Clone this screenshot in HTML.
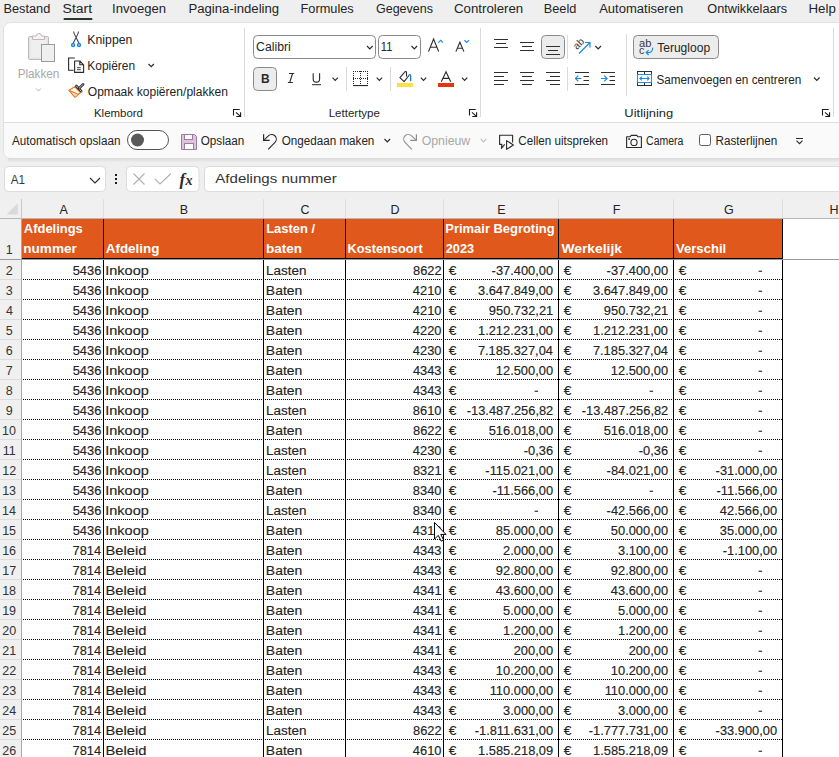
<!DOCTYPE html>
<html><head><meta charset="utf-8"><style>
html,body{margin:0;padding:0;background:#efefef;overflow:hidden;}
svg{display:block;font-family:"Liberation Sans",sans-serif;}
</style></head><body>
<svg width="839" height="757" viewBox="0 0 839 757" fill="#242424">
<rect x="0" y="0" width="839" height="757" fill="#efefef"/>
<text x="3.48" y="12.50" font-size="12.5" textLength="46.85" lengthAdjust="spacingAndGlyphs">Bestand</text>
<text x="62.57" y="12.50" font-size="12.5" textLength="29.53" lengthAdjust="spacingAndGlyphs">Start</text>
<text x="112.12" y="12.50" font-size="12.5" textLength="53.93" lengthAdjust="spacingAndGlyphs">Invoegen</text>
<text x="188.45" y="12.50" font-size="12.5" textLength="90.70" lengthAdjust="spacingAndGlyphs">Pagina-indeling</text>
<text x="300.48" y="12.50" font-size="12.5" textLength="53.24" lengthAdjust="spacingAndGlyphs">Formules</text>
<text x="375.97" y="12.50" font-size="12.5">Gegevens</text>
<text x="453.94" y="12.50" font-size="12.5" textLength="69.33" lengthAdjust="spacingAndGlyphs">Controleren</text>
<text x="543.78" y="12.50" font-size="12.5" textLength="32.58" lengthAdjust="spacingAndGlyphs">Beeld</text>
<text x="599.20" y="12.50" font-size="12.5" textLength="83.99" lengthAdjust="spacingAndGlyphs">Automatiseren</text>
<text x="707.33" y="12.50" font-size="12.5" textLength="79.82" lengthAdjust="spacingAndGlyphs">Ontwikkelaars</text>
<text x="808.54" y="12.50" font-size="12.5" textLength="27.32" lengthAdjust="spacingAndGlyphs">Help</text>
<rect x="63.5" y="18" width="29" height="2" rx="1" fill="#27382f"/>
<rect x="3.5" y="22.5" width="860" height="135.5" rx="7" fill="#ffffff" stroke="#e0e0e0"/>
<defs><clipPath id="pc"><rect x="4" y="23" width="860" height="135" rx="6.5"/></clipPath></defs>
<g clip-path="url(#pc)"><rect x="0" y="123" width="860" height="40" fill="#fafafa"/></g>
<rect x="4" y="122" width="850" height="1" fill="#e0e0e0"/>
<defs><linearGradient id="sh" x1="0" y1="0" x2="0" y2="1"><stop offset="0" stop-color="#d9d9d9"/><stop offset="1" stop-color="#efefef"/></linearGradient></defs>
<rect x="8" y="158" width="845" height="4.5" fill="url(#sh)"/>
<rect x="28.5" y="36.5" width="20" height="23" rx="1" fill="#e6e6e6" stroke="#b9b9b9"/>
<rect x="31" y="39" width="15" height="18" fill="#efefef"/>
<path d="M32.5 39.5 v-3.5 h4 a2.5 2.5 0 0 1 5 0 h3 v3.5 z" fill="#f4f4f4" stroke="#c4b4b8"/>
<rect x="41.5" y="44.5" width="13" height="17" fill="#efefef" stroke="#9a9a9a"/>
<text x="17.66" y="77.60" font-size="12.5" textLength="41.73" lengthAdjust="spacingAndGlyphs" fill="#a8a8a8">Plakken</text>
<path d="M36 88.5 l2.5 2.5 l2.5 -2.5" fill="none" stroke="#b0b0b0" stroke-width="1"/>
<path d="M73.6 31.5 Q74 34 76.1 37.5 L79 43.2 M78.6 31.5 Q78.2 34 76.1 37.5 L73.2 43.2" stroke="#4a4250" stroke-width="1.1" fill="none"/>
<circle cx="73.1" cy="45" r="1.5" fill="#bfe0f8" stroke="#1e8be0" stroke-width="1.4"/>
<circle cx="79" cy="45" r="1.5" fill="#bfe0f8" stroke="#1e8be0" stroke-width="1.4"/>
<text x="87.32" y="44.00" font-size="12.5" textLength="45.08" lengthAdjust="spacingAndGlyphs">Knippen</text>
<path d="M74.8 58 h-6.2 v12.3 h5" fill="none" stroke="#2a2a2a" stroke-width="1.1"/>
<path d="M74.6 61 h5.2 l3.8 3.8 v7.6 h-9 z M79.8 61 v3.8 h3.8" fill="#fff" stroke="#2a2a2a" stroke-width="1.1" stroke-linejoin="round"/>
<path d="M77 67.7 h3.8 M77 69.7 h3.8" stroke="#2a2a2a" stroke-width="0.9"/>
<text x="87.35" y="69.90" font-size="12.5" textLength="47.77" lengthAdjust="spacingAndGlyphs">Kopiëren</text>
<path d="M148.5 64 l2.7 2.7 l2.7 -2.7" fill="none" stroke="#2a2a2a" stroke-width="1.2"/>
<path d="M74.8 86.8 L69 90.3 L75 97.3 L80.6 92.6 Z" fill="#fff" stroke="#ea7a22" stroke-width="1.3" stroke-linejoin="round"/>
<path d="M69.5 90.6 L78.5 94.5" stroke="#ea7a22" stroke-width="1.2"/>
<path d="M73.5 93.5 L77.5 95 L75 97 Z" fill="#f9c98a"/>
<path d="M76.3 86 L81.2 91.2" stroke="#333" stroke-width="2.6" stroke-linecap="round"/>
<path d="M76.3 86 L81.2 91.2" stroke="#fff" stroke-width="0.7" stroke-linecap="round"/>
<path d="M78.8 88.6 L83.2 84.3" stroke="#333" stroke-width="2.6" stroke-linecap="round"/>
<path d="M79.3 88.1 L83.2 84.3" stroke="#fff" stroke-width="0.7" stroke-linecap="round"/>
<text x="87.76" y="95.60" font-size="12.5" textLength="140.26" lengthAdjust="spacingAndGlyphs">Opmaak kopiëren/plakken</text>
<text x="93.98" y="117.00" font-size="11.2" textLength="48.96" lengthAdjust="spacingAndGlyphs">Klembord</text>
<path d="M233.5 115.6 V109.5 H239.7 M236 112.3 L240.2 116.2 M240.6 112.3 V116.5 H236.3" fill="none" stroke="#1a1a1a" stroke-width="1.1"/>
<rect x="244" y="28" width="1" height="89" fill="#dadada"/>
<rect x="253.5" y="35.5" width="122" height="23" rx="4" fill="#fff" stroke="#8a8a8a"/>
<text x="256.09" y="50.70" font-size="12.5" textLength="34.66" lengthAdjust="spacingAndGlyphs">Calibri</text>
<path d="M367 46 l2.8 2.8 l2.8 -2.8" fill="none" stroke="#2a2a2a" stroke-width="1.2"/>
<rect x="378.5" y="35.5" width="42" height="23" rx="4" fill="#fff" stroke="#8a8a8a"/>
<text x="380.87" y="50.70" font-size="12.5" textLength="11.46" lengthAdjust="spacingAndGlyphs">11</text>
<path d="M411.5 46 l2.8 2.8 l2.8 -2.8" fill="none" stroke="#2a2a2a" stroke-width="1.2"/>
<path d="M428.5 51.6 L433.6 39 L438.7 51.6 M430.3 47.2 h6.6" fill="none" stroke="#2a2a2a" stroke-width="1.1"/>
<path d="M438.4 42.6 l2.3 -2.2 l2.3 2.2" fill="none" stroke="#1e8be0" stroke-width="1.2"/>
<path d="M455.9 51.6 L459.9 42.2 L463.9 51.6 M457.3 48.3 h5.2" fill="none" stroke="#2a2a2a" stroke-width="1.1"/>
<path d="M464.4 40.3 l2.3 2.2 l2.3 -2.2" fill="none" stroke="#1e8be0" stroke-width="1.2"/>
<rect x="253.5" y="67.5" width="23" height="23" rx="4" fill="#ececec" stroke="#8a8a8a"/>
<text x="261.12" y="82.60" font-size="12.5" textLength="8.64" lengthAdjust="spacingAndGlyphs" font-weight="bold" fill="#2a2a2a">B</text>
<path d="M289 73.5 h5.2 M287.9 82.5 h5 M292.6 73.5 L289.7 82.5" stroke="#2a2a2a" stroke-width="1.1" fill="none"/>
<path d="M313.2 73.3 v5.6 a3.2 3.2 0 0 0 6.4 0 v-5.6" stroke="#2a2a2a" stroke-width="1.1" fill="none"/>
<rect x="312" y="84.2" width="9" height="1" fill="#2a2a2a"/>
<path d="M332.5 77.7 l2.7 2.7 l2.7 -2.7" fill="none" stroke="#2a2a2a" stroke-width="1.2"/>
<rect x="346" y="67" width="1" height="24" fill="#dadada"/>
<defs><pattern id="dh" x="0" y="0" width="2" height="2" patternUnits="userSpaceOnUse"><rect x="1" y="1" width="1" height="1" fill="#2a2a2a"/></pattern></defs>
<path d="M353 71h1v1h-1zM355 71h1v1h-1zM357 71h1v1h-1zM359 71h1v1h-1zM361 71h1v1h-1zM363 71h1v1h-1zM365 71h1v1h-1zM367 71h1v1h-1zM353 78h1v1h-1zM355 78h1v1h-1zM357 78h1v1h-1zM359 78h1v1h-1zM361 78h1v1h-1zM363 78h1v1h-1zM365 78h1v1h-1zM367 78h1v1h-1zM353 71h1v1h-1zM353 73h1v1h-1zM353 75h1v1h-1zM353 77h1v1h-1zM353 79h1v1h-1zM353 81h1v1h-1zM353 83h1v1h-1zM360 71h1v1h-1zM360 73h1v1h-1zM360 75h1v1h-1zM360 77h1v1h-1zM360 79h1v1h-1zM360 81h1v1h-1zM360 83h1v1h-1zM367 71h1v1h-1zM367 73h1v1h-1zM367 75h1v1h-1zM367 77h1v1h-1zM367 79h1v1h-1zM367 81h1v1h-1zM367 83h1v1h-1z" fill="#2a2a2a"/>
<rect x="353" y="85" width="15" height="1.1" fill="#2a2a2a"/>
<path d="M376.7 77.7 l2.7 2.7 l2.7 -2.7" fill="none" stroke="#2a2a2a" stroke-width="1.2"/>
<rect x="390" y="67" width="1" height="24" fill="#dadada"/>
<path d="M406.5 76.5 V72.2 Q405.5 70.6 404.5 72.3 L399.9 77.6 L404.1 81.7 L408.9 75.5" fill="#fff" stroke="#2a2a2a" stroke-width="1.1" stroke-linejoin="round"/>
<path d="M409 75 Q410.5 74.2 410.6 76 V80.5" fill="none" stroke="#1e78d0" stroke-width="1.4" stroke-linecap="round"/>
<rect x="397" y="83" width="16" height="4" fill="#fbe04a"/>
<path d="M420.8 77.7 l2.7 2.7 l2.7 -2.7" fill="none" stroke="#2a2a2a" stroke-width="1.2"/>
<path d="M441.3 81.8 L446 71.8 L450.7 81.8 M442.8 78.4 h6.4" fill="none" stroke="#2a2a2a" stroke-width="1.1"/>
<rect x="438" y="83" width="16" height="4" fill="#e8340e"/>
<path d="M461.9 77.7 l2.7 2.7 l2.7 -2.7" fill="none" stroke="#2a2a2a" stroke-width="1.2"/>
<path d="M469.5 115.6 V109.5 H475.7 M472 112.3 L476.2 116.2 M476.6 112.3 V116.5 H472.3" fill="none" stroke="#1a1a1a" stroke-width="1.1"/>
<text x="328.68" y="117.00" font-size="11.2" textLength="51.27" lengthAdjust="spacingAndGlyphs">Lettertype</text>
<rect x="480" y="28" width="1" height="89" fill="#dadada"/>
<path d="M494 39.5 h14 M496 43.5 h10 M494 47.5 h14 " stroke="#2f2f2f" stroke-width="1.2" fill="none"/>
<path d="M520 42.5 h14 M522 46.5 h10 M520 50.5 h14 " stroke="#2f2f2f" stroke-width="1.2" fill="none"/>
<rect x="541.5" y="35.5" width="23" height="23" rx="4" fill="#ececec" stroke="#8a8a8a"/>
<path d="M546 46.5 h14 M548 50.5 h10 M546 54.5 h14 " stroke="#2f2f2f" stroke-width="1.2" fill="none"/>
<rect x="567" y="35" width="1" height="24" fill="#dadada"/>
<text x="0" y="0" font-size="10" fill="#3a3a3a" transform="translate(577 50) rotate(-45)">ab</text>
<path d="M579 53.5 L590 42.5 M585 42.5 h5 v5" fill="none" stroke="#1e8be0" stroke-width="1.2"/>
<path d="M595.4 46 l2.8 2.8 l2.8 -2.8" fill="none" stroke="#2a2a2a" stroke-width="1.2"/>
<path d="M494 72.5 h14 M494 76.5 h10 M494 80.5 h14 M494 84.5 h10 " stroke="#2f2f2f" stroke-width="1.2" fill="none"/>
<path d="M520 72.5 h14 M522 76.5 h10 M520 80.5 h14 M522 84.5 h10 " stroke="#2f2f2f" stroke-width="1.2" fill="none"/>
<path d="M546 72.5 h14 M550 76.5 h10 M546 80.5 h14 M550 84.5 h10 " stroke="#2f2f2f" stroke-width="1.2" fill="none"/>
<rect x="567" y="67" width="1" height="24" fill="#dadada"/>
<path d="M575 72.5 h14 M583.5 76.5 h5.5 M583.5 80.5 h5.5 M575 84.5 h14 " stroke="#2f2f2f" stroke-width="1.2" fill="none"/>
<path d="M581.5 78.5 h-6 M578.3 75.7 l-2.8 2.8 l2.8 2.8" fill="none" stroke="#1e8be0" stroke-width="1.2"/>
<path d="M601 72.5 h14 M609.5 76.5 h5.5 M609.5 80.5 h5.5 M601 84.5 h14 " stroke="#2f2f2f" stroke-width="1.2" fill="none"/>
<path d="M601 78.5 h6 M604.3 75.7 l2.8 2.8 l-2.8 2.8" fill="none" stroke="#1e8be0" stroke-width="1.2"/>
<rect x="626" y="34" width="1" height="62" fill="#dadada"/>
<rect x="633.5" y="35.5" width="85" height="23" rx="4" fill="#ececec" stroke="#8a8a8a"/>
<text x="639.05" y="46.50" font-size="10" textLength="12.42" lengthAdjust="spacingAndGlyphs" fill="#3a3a3a">ab</text>
<text x="639.07" y="53.50" font-size="10" textLength="5.40" lengthAdjust="spacingAndGlyphs" fill="#3a3a3a">c</text>
<path d="M652.6 47.6 Q653 53.3 646.5 52.6 M648.6 50.2 l-2.4 2.4 l2.4 2.4" fill="none" stroke="#1e8be0" stroke-width="1.2"/>
<text x="657.16" y="51.80" font-size="12.5" textLength="52.95" lengthAdjust="spacingAndGlyphs">Terugloop</text>
<rect x="637.5" y="71.5" width="14" height="14" fill="#fff" stroke="#2f2f2f"/>
<path d="M644.5 71.5 v3 M644.5 82.5 v3" fill="none" stroke="#2f2f2f"/>
<rect x="637.5" y="74.5" width="14" height="8" fill="#fff" stroke="#1e8be0"/>
<path d="M640 78.5 h9 M641.8 76.6 l-1.9 1.9 l1.9 1.9 M647.2 76.6 l1.9 1.9 l-1.9 1.9" fill="none" stroke="#1e8be0" stroke-width="1.1"/>
<text x="656.47" y="83.50" font-size="12.5" textLength="144.72" lengthAdjust="spacingAndGlyphs">Samenvoegen en centreren</text>
<path d="M814 77.5 l2.8 2.8 l2.8 -2.8" fill="none" stroke="#2a2a2a" stroke-width="1.2"/>
<text x="624.33" y="117.00" font-size="11.2" textLength="48.90" lengthAdjust="spacingAndGlyphs">Uitlijning</text>
<path d="M822.5 115.6 V109.5 H828.7 M825 112.3 L829.2 116.2 M829.6 112.3 V116.5 H825.3" fill="none" stroke="#1a1a1a" stroke-width="1.1"/>
<rect x="833" y="28" width="1" height="89" fill="#dadada"/>
<text x="12.10" y="144.80" font-size="12.5" textLength="108.30" lengthAdjust="spacingAndGlyphs">Automatisch opslaan</text>
<rect x="127.5" y="130.5" width="41" height="19" rx="9.5" fill="#fff" stroke="#555"/>
<circle cx="137.5" cy="140" r="6.5" fill="#5a5a5a"/>
<path d="M181.5 134.5 h13 l2 2 v13 h-15 z" fill="#dcc4dc" stroke="#a07aa0"/>
<rect x="184.5" y="134.5" width="8" height="5" fill="#fff" stroke="#a07aa0"/>
<rect x="184.5" y="143.5" width="9" height="6" fill="#fff" stroke="#a07aa0"/>
<text x="200.77" y="144.80" font-size="12.5" textLength="43.58" lengthAdjust="spacingAndGlyphs">Opslaan</text>
<path d="M263.6 134.3 V140.3 H269.7" fill="none" stroke="#2a2a2a" stroke-width="1.2"/>
<path d="M264.2 139.8 L268.3 135.9 A4.6 4.6 0 0 1 275 142.3 L268.2 149.3" fill="none" stroke="#2a2a2a" stroke-width="1.1"/>
<text x="281.78" y="144.80" font-size="12.5" textLength="92.59" lengthAdjust="spacingAndGlyphs">Ongedaan maken</text>
<path d="M384.5 139 l2.8 2.8 l2.8 -2.8" fill="none" stroke="#2a2a2a" stroke-width="1.2"/>
<path d="M416.4 134.3 V140.3 H410.3" fill="none" stroke="#8e8e8e" stroke-width="1.2"/>
<path d="M415.8 139.8 L411.7 135.9 A4.6 4.6 0 0 0 405 142.3 L411.8 149.3" fill="none" stroke="#8e8e8e" stroke-width="1.1"/>
<text x="421.65" y="144.80" font-size="12.5" textLength="48.62" lengthAdjust="spacingAndGlyphs" fill="#a8a8a8">Opnieuw</text>
<path d="M480.7 139 l2.8 2.8 l2.8 -2.8" fill="none" stroke="#c0c0c0" stroke-width="1.2"/>
<path d="M512.6 142.5 V135.3 H499.6 V144.4 H501.9 L501.4 148.4 L504.7 144.3" fill="none" stroke="#2a2a2a" stroke-width="1.1" stroke-linejoin="round"/>
<path d="M506.6 140.6 V149.4 L513.4 145 Z" fill="#fff" stroke="#2a2a2a" stroke-width="1.1" stroke-linejoin="round"/>
<text x="518.32" y="144.70" font-size="12.5" textLength="89.76" lengthAdjust="spacingAndGlyphs">Cellen uitspreken</text>
<path d="M626.6 136.7 H630.3 L631 135.4 H637 L637.7 136.7 H641.4 V147.5 H626.6 Z" fill="none" stroke="#2a2a2a" stroke-width="1.1" stroke-linejoin="round"/>
<circle cx="634" cy="142.4" r="3.1" fill="none" stroke="#2a2a2a" stroke-width="1.1"/>
<rect x="628.3" y="138.3" width="1.6" height="1.6" fill="#2a2a2a"/>
<text x="646.08" y="144.90" font-size="12.5" textLength="37.34" lengthAdjust="spacingAndGlyphs">Camera</text>
<rect x="699.5" y="134.5" width="11" height="11" rx="2" fill="#fff" stroke="#5a5a5a"/>
<text x="715.47" y="144.90" font-size="12.5" textLength="61.70" lengthAdjust="spacingAndGlyphs">Rasterlijnen</text>
<path d="M796 138.5 h7 M796.5 140.6 l3 3 l3 -3" fill="none" stroke="#2a2a2a" stroke-width="1.1"/>
<rect x="4.5" y="166.5" width="101" height="25" rx="4" fill="#fff" stroke="#dcdcdc"/>
<text x="10.80" y="183.90" font-size="12.5" textLength="14.26" lengthAdjust="spacingAndGlyphs" fill="#3a3a3a">A1</text>
<path d="M90 178 l5 5 l5 -5" fill="none" stroke="#2a2a2a" stroke-width="1.1"/>
<path d="M115 174h2v2h-2z M115 178h2v2h-2z M115 182h2v2h-2z" fill="#1a1a1a"/>
<rect x="126.5" y="166.5" width="72.5" height="25" rx="4" fill="#fff" stroke="#dcdcdc"/>
<path d="M133.5 173.5 l11 11 M144.5 173.5 l-11 11" stroke="#b0b0b0" stroke-width="1.1"/>
<path d="M155 179 l5 5 l11 -10.5" fill="none" stroke="#b0b0b0" stroke-width="1.1"/>
<text x="179.5" y="185" font-size="17" font-family="Liberation Serif" font-style="italic" font-weight="bold" fill="#2a2a2a">f</text>
<text x="185.5" y="185" font-size="14" font-family="Liberation Serif" font-style="italic" font-weight="bold" fill="#2a2a2a">x</text>
<rect x="204.5" y="166.5" width="650" height="25" rx="4" fill="#fff" stroke="#dcdcdc"/>
<text x="215.30" y="182.90" font-size="12.5" textLength="121.39" lengthAdjust="spacingAndGlyphs" fill="#333333">Afdelings nummer</text>
<rect x="0" y="199" width="839" height="558" fill="#ffffff"/>
<rect x="0" y="199" width="839" height="19" fill="#f0f0f0"/>
<rect x="0" y="218" width="839" height="1" fill="#b4b8ba"/>
<rect x="0" y="219" width="21" height="538" fill="#f0f0f0"/>
<rect x="21" y="199" width="1" height="20" fill="#c8c8c8"/>
<rect x="21" y="219" width="1" height="538" fill="#a8a8a8"/>
<path d="M6.5 214.6 L17.8 203.3 V214.6 Z" fill="#dadada"/>
<rect x="103" y="199" width="1" height="19" fill="#dedede"/>
<rect x="263" y="199" width="1" height="19" fill="#dedede"/>
<rect x="345" y="199" width="1" height="19" fill="#dedede"/>
<rect x="443" y="199" width="1" height="19" fill="#dedede"/>
<rect x="558" y="199" width="1" height="19" fill="#dedede"/>
<rect x="673" y="199" width="1" height="19" fill="#dedede"/>
<rect x="782" y="199" width="1" height="19" fill="#dedede"/>
<text x="59.54" y="213.70" font-size="12.5">A</text>
<text x="179.86" y="213.70" font-size="12.5">B</text>
<text x="300.61" y="213.70" font-size="12.5">C</text>
<text x="390.48" y="213.70" font-size="12.5">D</text>
<text x="497.29" y="213.70" font-size="12.5">E</text>
<text x="612.64" y="213.70" font-size="12.5">F</text>
<text x="723.98" y="213.70" font-size="12.5">G</text>
<text x="829.50" y="213.70" font-size="12.5">H</text>
<rect x="0" y="259" width="21" height="1" fill="#dcdcdc"/>
<text x="5.64" y="253.90" font-size="12.5" fill="#333333">1</text>
<rect x="0" y="279" width="21" height="1" fill="#dcdcdc"/>
<text x="5.83" y="274.90" font-size="12.5" fill="#333333">2</text>
<rect x="0" y="299" width="21" height="1" fill="#dcdcdc"/>
<text x="5.83" y="294.90" font-size="12.5" fill="#333333">3</text>
<rect x="0" y="319" width="21" height="1" fill="#dcdcdc"/>
<text x="5.89" y="314.90" font-size="12.5" fill="#333333">4</text>
<rect x="0" y="339" width="21" height="1" fill="#dcdcdc"/>
<text x="5.83" y="334.90" font-size="12.5" fill="#333333">5</text>
<rect x="0" y="359" width="21" height="1" fill="#dcdcdc"/>
<text x="5.77" y="354.90" font-size="12.5" fill="#333333">6</text>
<rect x="0" y="379" width="21" height="1" fill="#dcdcdc"/>
<text x="5.83" y="374.90" font-size="12.5" fill="#333333">7</text>
<rect x="0" y="399" width="21" height="1" fill="#dcdcdc"/>
<text x="5.80" y="394.90" font-size="12.5" fill="#333333">8</text>
<rect x="0" y="419" width="21" height="1" fill="#dcdcdc"/>
<text x="5.83" y="414.90" font-size="12.5" fill="#333333">9</text>
<rect x="0" y="439" width="21" height="1" fill="#dcdcdc"/>
<text x="2.11" y="434.90" font-size="12.5" fill="#333333">10</text>
<rect x="0" y="459" width="21" height="1" fill="#dcdcdc"/>
<text x="2.64" y="454.90" font-size="12.5" fill="#333333">11</text>
<rect x="0" y="479" width="21" height="1" fill="#dcdcdc"/>
<text x="2.21" y="474.90" font-size="12.5" fill="#333333">12</text>
<rect x="0" y="499" width="21" height="1" fill="#dcdcdc"/>
<text x="2.14" y="494.90" font-size="12.5" fill="#333333">13</text>
<rect x="0" y="519" width="21" height="1" fill="#dcdcdc"/>
<text x="2.08" y="514.90" font-size="12.5" fill="#333333">14</text>
<rect x="0" y="539" width="21" height="1" fill="#dcdcdc"/>
<text x="2.14" y="534.90" font-size="12.5" fill="#333333">15</text>
<rect x="0" y="559" width="21" height="1" fill="#dcdcdc"/>
<text x="2.14" y="554.90" font-size="12.5" fill="#333333">16</text>
<rect x="0" y="579" width="21" height="1" fill="#dcdcdc"/>
<text x="2.21" y="574.90" font-size="12.5" fill="#333333">17</text>
<rect x="0" y="599" width="21" height="1" fill="#dcdcdc"/>
<text x="2.14" y="594.90" font-size="12.5" fill="#333333">18</text>
<rect x="0" y="619" width="21" height="1" fill="#dcdcdc"/>
<text x="2.17" y="614.90" font-size="12.5" fill="#333333">19</text>
<rect x="0" y="639" width="21" height="1" fill="#dcdcdc"/>
<text x="2.27" y="634.90" font-size="12.5" fill="#333333">20</text>
<rect x="0" y="659" width="21" height="1" fill="#dcdcdc"/>
<text x="2.33" y="654.90" font-size="12.5" fill="#333333">21</text>
<rect x="0" y="679" width="21" height="1" fill="#dcdcdc"/>
<text x="2.36" y="674.90" font-size="12.5" fill="#333333">22</text>
<rect x="0" y="699" width="21" height="1" fill="#dcdcdc"/>
<text x="2.30" y="694.90" font-size="12.5" fill="#333333">23</text>
<rect x="0" y="719" width="21" height="1" fill="#dcdcdc"/>
<text x="2.24" y="714.90" font-size="12.5" fill="#333333">24</text>
<rect x="0" y="739" width="21" height="1" fill="#dcdcdc"/>
<text x="2.30" y="734.90" font-size="12.5" fill="#333333">25</text>
<text x="2.30" y="754.90" font-size="12.5" fill="#333333">26</text>
<rect x="22" y="219" width="760" height="39" fill="#e0581c"/>
<rect x="22" y="258" width="761" height="1" fill="#000"/>
<rect x="22" y="259" width="817" height="1" fill="#9a9a9a"/>
<rect x="0" y="259" width="21" height="1" fill="#9a9a9a"/>
<text x="23.88" y="232.90" font-size="12.5" textLength="58.85" lengthAdjust="spacingAndGlyphs" font-weight="bold" fill="#ffffff">Afdelings</text>
<text x="23.32" y="252.60" font-size="12.5" textLength="53.49" lengthAdjust="spacingAndGlyphs" font-weight="bold" fill="#ffffff">nummer</text>
<text x="105.76" y="252.60" font-size="12.5" textLength="53.60" lengthAdjust="spacingAndGlyphs" font-weight="bold" fill="#ffffff">Afdeling</text>
<text x="266.16" y="233.00" font-size="12.5" textLength="48.96" lengthAdjust="spacingAndGlyphs" font-weight="bold" fill="#ffffff">Lasten /</text>
<text x="266.12" y="252.60" font-size="12.5" textLength="36.02" lengthAdjust="spacingAndGlyphs" font-weight="bold" fill="#ffffff">baten</text>
<text x="347.57" y="252.60" font-size="12.5" textLength="75.21" lengthAdjust="spacingAndGlyphs" font-weight="bold" fill="#ffffff">Kostensoort</text>
<text x="445.36" y="233.00" font-size="12.5" textLength="109.19" lengthAdjust="spacingAndGlyphs" font-weight="bold" fill="#ffffff">Primair Begroting</text>
<text x="445.75" y="252.60" font-size="12.5" textLength="28.39" lengthAdjust="spacingAndGlyphs" font-weight="bold" fill="#ffffff">2023</text>
<text x="561.40" y="252.60" font-size="12.5" textLength="60.64" lengthAdjust="spacingAndGlyphs" font-weight="bold" fill="#ffffff">Werkelijk</text>
<text x="676.03" y="252.60" font-size="12.5" textLength="50.13" lengthAdjust="spacingAndGlyphs" font-weight="bold" fill="#ffffff">Verschil</text>
<text x="72.72" y="274.50" font-size="12.5" textLength="28.59" lengthAdjust="spacingAndGlyphs" stroke="#242424" stroke-width="0.15">5436</text>
<text x="105.30" y="274.50" font-size="12.5" textLength="43.42" lengthAdjust="spacingAndGlyphs" stroke="#242424" stroke-width="0.15">Inkoop</text>
<text x="265.92" y="274.50" font-size="12.5" textLength="40.49" lengthAdjust="spacingAndGlyphs" stroke="#242424" stroke-width="0.15">Lasten</text>
<text x="413.04" y="274.50" font-size="12.5" textLength="28.59" lengthAdjust="spacingAndGlyphs" stroke="#242424" stroke-width="0.15">8622</text>
<text x="448.86" y="274.50" font-size="12.5" textLength="7.66" lengthAdjust="spacingAndGlyphs" stroke="#242424" stroke-width="0.15">€</text>
<text x="491.61" y="274.50" font-size="12.5" textLength="61.46" lengthAdjust="spacingAndGlyphs" stroke="#242424" stroke-width="0.15">-37.400,00</text>
<text x="563.86" y="274.50" font-size="12.5" textLength="7.66" lengthAdjust="spacingAndGlyphs" stroke="#242424" stroke-width="0.15">€</text>
<text x="606.61" y="274.50" font-size="12.5" textLength="61.46" lengthAdjust="spacingAndGlyphs" stroke="#242424" stroke-width="0.15">-37.400,00</text>
<text x="678.86" y="274.50" font-size="12.5" textLength="7.66" lengthAdjust="spacingAndGlyphs" stroke="#242424" stroke-width="0.15">€</text>
<rect x="758.6" y="270.7" width="3.5" height="1.1" fill="#242424"/>
<text x="72.72" y="294.50" font-size="12.5" textLength="28.59" lengthAdjust="spacingAndGlyphs" stroke="#242424" stroke-width="0.15">5436</text>
<text x="105.30" y="294.50" font-size="12.5" textLength="43.42" lengthAdjust="spacingAndGlyphs" stroke="#242424" stroke-width="0.15">Inkoop</text>
<text x="265.89" y="294.50" font-size="12.5" textLength="36.36" lengthAdjust="spacingAndGlyphs" stroke="#242424" stroke-width="0.15">Baten</text>
<text x="412.85" y="294.50" font-size="12.5" textLength="28.59" lengthAdjust="spacingAndGlyphs" stroke="#242424" stroke-width="0.15">4210</text>
<text x="448.86" y="294.50" font-size="12.5" textLength="7.66" lengthAdjust="spacingAndGlyphs" stroke="#242424" stroke-width="0.15">€</text>
<text x="477.99" y="294.50" font-size="12.5" textLength="75.05" lengthAdjust="spacingAndGlyphs" stroke="#242424" stroke-width="0.15">3.647.849,00</text>
<text x="563.86" y="294.50" font-size="12.5" textLength="7.66" lengthAdjust="spacingAndGlyphs" stroke="#242424" stroke-width="0.15">€</text>
<text x="592.99" y="294.50" font-size="12.5" textLength="75.05" lengthAdjust="spacingAndGlyphs" stroke="#242424" stroke-width="0.15">3.647.849,00</text>
<text x="678.86" y="294.50" font-size="12.5" textLength="7.66" lengthAdjust="spacingAndGlyphs" stroke="#242424" stroke-width="0.15">€</text>
<rect x="758.6" y="290.7" width="3.5" height="1.1" fill="#242424"/>
<text x="72.72" y="314.50" font-size="12.5" textLength="28.59" lengthAdjust="spacingAndGlyphs" stroke="#242424" stroke-width="0.15">5436</text>
<text x="105.30" y="314.50" font-size="12.5" textLength="43.42" lengthAdjust="spacingAndGlyphs" stroke="#242424" stroke-width="0.15">Inkoop</text>
<text x="265.89" y="314.50" font-size="12.5" textLength="36.36" lengthAdjust="spacingAndGlyphs" stroke="#242424" stroke-width="0.15">Baten</text>
<text x="412.85" y="314.50" font-size="12.5" textLength="28.59" lengthAdjust="spacingAndGlyphs" stroke="#242424" stroke-width="0.15">4210</text>
<text x="448.86" y="314.50" font-size="12.5" textLength="7.66" lengthAdjust="spacingAndGlyphs" stroke="#242424" stroke-width="0.15">€</text>
<text x="488.85" y="314.50" font-size="12.5" textLength="64.33" lengthAdjust="spacingAndGlyphs" stroke="#242424" stroke-width="0.15">950.732,21</text>
<text x="563.86" y="314.50" font-size="12.5" textLength="7.66" lengthAdjust="spacingAndGlyphs" stroke="#242424" stroke-width="0.15">€</text>
<text x="603.85" y="314.50" font-size="12.5" textLength="64.33" lengthAdjust="spacingAndGlyphs" stroke="#242424" stroke-width="0.15">950.732,21</text>
<text x="678.86" y="314.50" font-size="12.5" textLength="7.66" lengthAdjust="spacingAndGlyphs" stroke="#242424" stroke-width="0.15">€</text>
<rect x="758.6" y="310.7" width="3.5" height="1.1" fill="#242424"/>
<text x="72.72" y="334.50" font-size="12.5" textLength="28.59" lengthAdjust="spacingAndGlyphs" stroke="#242424" stroke-width="0.15">5436</text>
<text x="105.30" y="334.50" font-size="12.5" textLength="43.42" lengthAdjust="spacingAndGlyphs" stroke="#242424" stroke-width="0.15">Inkoop</text>
<text x="265.89" y="334.50" font-size="12.5" textLength="36.36" lengthAdjust="spacingAndGlyphs" stroke="#242424" stroke-width="0.15">Baten</text>
<text x="412.85" y="334.50" font-size="12.5" textLength="28.59" lengthAdjust="spacingAndGlyphs" stroke="#242424" stroke-width="0.15">4220</text>
<text x="448.86" y="334.50" font-size="12.5" textLength="7.66" lengthAdjust="spacingAndGlyphs" stroke="#242424" stroke-width="0.15">€</text>
<text x="477.99" y="334.50" font-size="12.5" textLength="75.05" lengthAdjust="spacingAndGlyphs" stroke="#242424" stroke-width="0.15">1.212.231,00</text>
<text x="563.86" y="334.50" font-size="12.5" textLength="7.66" lengthAdjust="spacingAndGlyphs" stroke="#242424" stroke-width="0.15">€</text>
<text x="592.99" y="334.50" font-size="12.5" textLength="75.05" lengthAdjust="spacingAndGlyphs" stroke="#242424" stroke-width="0.15">1.212.231,00</text>
<text x="678.86" y="334.50" font-size="12.5" textLength="7.66" lengthAdjust="spacingAndGlyphs" stroke="#242424" stroke-width="0.15">€</text>
<rect x="758.6" y="330.7" width="3.5" height="1.1" fill="#242424"/>
<text x="72.72" y="354.50" font-size="12.5" textLength="28.59" lengthAdjust="spacingAndGlyphs" stroke="#242424" stroke-width="0.15">5436</text>
<text x="105.30" y="354.50" font-size="12.5" textLength="43.42" lengthAdjust="spacingAndGlyphs" stroke="#242424" stroke-width="0.15">Inkoop</text>
<text x="265.89" y="354.50" font-size="12.5" textLength="36.36" lengthAdjust="spacingAndGlyphs" stroke="#242424" stroke-width="0.15">Baten</text>
<text x="412.85" y="354.50" font-size="12.5" textLength="28.59" lengthAdjust="spacingAndGlyphs" stroke="#242424" stroke-width="0.15">4230</text>
<text x="448.86" y="354.50" font-size="12.5" textLength="7.66" lengthAdjust="spacingAndGlyphs" stroke="#242424" stroke-width="0.15">€</text>
<text x="477.92" y="354.50" font-size="12.5" textLength="75.05" lengthAdjust="spacingAndGlyphs" stroke="#242424" stroke-width="0.15">7.185.327,04</text>
<text x="563.86" y="354.50" font-size="12.5" textLength="7.66" lengthAdjust="spacingAndGlyphs" stroke="#242424" stroke-width="0.15">€</text>
<text x="592.92" y="354.50" font-size="12.5" textLength="75.05" lengthAdjust="spacingAndGlyphs" stroke="#242424" stroke-width="0.15">7.185.327,04</text>
<text x="678.86" y="354.50" font-size="12.5" textLength="7.66" lengthAdjust="spacingAndGlyphs" stroke="#242424" stroke-width="0.15">€</text>
<rect x="758.6" y="350.7" width="3.5" height="1.1" fill="#242424"/>
<text x="72.72" y="374.50" font-size="12.5" textLength="28.59" lengthAdjust="spacingAndGlyphs" stroke="#242424" stroke-width="0.15">5436</text>
<text x="105.30" y="374.50" font-size="12.5" textLength="43.42" lengthAdjust="spacingAndGlyphs" stroke="#242424" stroke-width="0.15">Inkoop</text>
<text x="265.89" y="374.50" font-size="12.5" textLength="36.36" lengthAdjust="spacingAndGlyphs" stroke="#242424" stroke-width="0.15">Baten</text>
<text x="412.92" y="374.50" font-size="12.5" textLength="28.59" lengthAdjust="spacingAndGlyphs" stroke="#242424" stroke-width="0.15">4343</text>
<text x="448.86" y="374.50" font-size="12.5" textLength="7.66" lengthAdjust="spacingAndGlyphs" stroke="#242424" stroke-width="0.15">€</text>
<text x="495.85" y="374.50" font-size="12.5" textLength="57.18" lengthAdjust="spacingAndGlyphs" stroke="#242424" stroke-width="0.15">12.500,00</text>
<text x="563.86" y="374.50" font-size="12.5" textLength="7.66" lengthAdjust="spacingAndGlyphs" stroke="#242424" stroke-width="0.15">€</text>
<text x="610.85" y="374.50" font-size="12.5" textLength="57.18" lengthAdjust="spacingAndGlyphs" stroke="#242424" stroke-width="0.15">12.500,00</text>
<text x="678.86" y="374.50" font-size="12.5" textLength="7.66" lengthAdjust="spacingAndGlyphs" stroke="#242424" stroke-width="0.15">€</text>
<rect x="758.6" y="370.7" width="3.5" height="1.1" fill="#242424"/>
<text x="72.72" y="394.50" font-size="12.5" textLength="28.59" lengthAdjust="spacingAndGlyphs" stroke="#242424" stroke-width="0.15">5436</text>
<text x="105.30" y="394.50" font-size="12.5" textLength="43.42" lengthAdjust="spacingAndGlyphs" stroke="#242424" stroke-width="0.15">Inkoop</text>
<text x="265.89" y="394.50" font-size="12.5" textLength="36.36" lengthAdjust="spacingAndGlyphs" stroke="#242424" stroke-width="0.15">Baten</text>
<text x="412.92" y="394.50" font-size="12.5" textLength="28.59" lengthAdjust="spacingAndGlyphs" stroke="#242424" stroke-width="0.15">4343</text>
<text x="448.86" y="394.50" font-size="12.5" textLength="7.66" lengthAdjust="spacingAndGlyphs" stroke="#242424" stroke-width="0.15">€</text>
<rect x="534.6" y="390.7" width="3.5" height="1.1" fill="#242424"/>
<text x="563.86" y="394.50" font-size="12.5" textLength="7.66" lengthAdjust="spacingAndGlyphs" stroke="#242424" stroke-width="0.15">€</text>
<rect x="649.6" y="390.7" width="3.5" height="1.1" fill="#242424"/>
<text x="678.86" y="394.50" font-size="12.5" textLength="7.66" lengthAdjust="spacingAndGlyphs" stroke="#242424" stroke-width="0.15">€</text>
<rect x="758.6" y="390.7" width="3.5" height="1.1" fill="#242424"/>
<text x="72.72" y="414.50" font-size="12.5" textLength="28.59" lengthAdjust="spacingAndGlyphs" stroke="#242424" stroke-width="0.15">5436</text>
<text x="105.30" y="414.50" font-size="12.5" textLength="43.42" lengthAdjust="spacingAndGlyphs" stroke="#242424" stroke-width="0.15">Inkoop</text>
<text x="265.92" y="414.50" font-size="12.5" textLength="40.49" lengthAdjust="spacingAndGlyphs" stroke="#242424" stroke-width="0.15">Lasten</text>
<text x="412.85" y="414.50" font-size="12.5" textLength="28.59" lengthAdjust="spacingAndGlyphs" stroke="#242424" stroke-width="0.15">8610</text>
<text x="448.86" y="414.50" font-size="12.5" textLength="7.66" lengthAdjust="spacingAndGlyphs" stroke="#242424" stroke-width="0.15">€</text>
<text x="466.80" y="414.50" font-size="12.5" textLength="86.48" lengthAdjust="spacingAndGlyphs" stroke="#242424" stroke-width="0.15">-13.487.256,82</text>
<text x="563.86" y="414.50" font-size="12.5" textLength="7.66" lengthAdjust="spacingAndGlyphs" stroke="#242424" stroke-width="0.15">€</text>
<text x="581.80" y="414.50" font-size="12.5" textLength="86.48" lengthAdjust="spacingAndGlyphs" stroke="#242424" stroke-width="0.15">-13.487.256,82</text>
<text x="678.86" y="414.50" font-size="12.5" textLength="7.66" lengthAdjust="spacingAndGlyphs" stroke="#242424" stroke-width="0.15">€</text>
<rect x="758.6" y="410.7" width="3.5" height="1.1" fill="#242424"/>
<text x="72.72" y="434.50" font-size="12.5" textLength="28.59" lengthAdjust="spacingAndGlyphs" stroke="#242424" stroke-width="0.15">5436</text>
<text x="105.30" y="434.50" font-size="12.5" textLength="43.42" lengthAdjust="spacingAndGlyphs" stroke="#242424" stroke-width="0.15">Inkoop</text>
<text x="265.89" y="434.50" font-size="12.5" textLength="36.36" lengthAdjust="spacingAndGlyphs" stroke="#242424" stroke-width="0.15">Baten</text>
<text x="413.04" y="434.50" font-size="12.5" textLength="28.59" lengthAdjust="spacingAndGlyphs" stroke="#242424" stroke-width="0.15">8622</text>
<text x="448.86" y="434.50" font-size="12.5" textLength="7.66" lengthAdjust="spacingAndGlyphs" stroke="#242424" stroke-width="0.15">€</text>
<text x="488.72" y="434.50" font-size="12.5" textLength="64.33" lengthAdjust="spacingAndGlyphs" stroke="#242424" stroke-width="0.15">516.018,00</text>
<text x="563.86" y="434.50" font-size="12.5" textLength="7.66" lengthAdjust="spacingAndGlyphs" stroke="#242424" stroke-width="0.15">€</text>
<text x="603.72" y="434.50" font-size="12.5" textLength="64.33" lengthAdjust="spacingAndGlyphs" stroke="#242424" stroke-width="0.15">516.018,00</text>
<text x="678.86" y="434.50" font-size="12.5" textLength="7.66" lengthAdjust="spacingAndGlyphs" stroke="#242424" stroke-width="0.15">€</text>
<rect x="758.6" y="430.7" width="3.5" height="1.1" fill="#242424"/>
<text x="72.72" y="454.50" font-size="12.5" textLength="28.59" lengthAdjust="spacingAndGlyphs" stroke="#242424" stroke-width="0.15">5436</text>
<text x="105.30" y="454.50" font-size="12.5" textLength="43.42" lengthAdjust="spacingAndGlyphs" stroke="#242424" stroke-width="0.15">Inkoop</text>
<text x="265.92" y="454.50" font-size="12.5" textLength="40.49" lengthAdjust="spacingAndGlyphs" stroke="#242424" stroke-width="0.15">Lasten</text>
<text x="412.85" y="454.50" font-size="12.5" textLength="28.59" lengthAdjust="spacingAndGlyphs" stroke="#242424" stroke-width="0.15">4230</text>
<text x="448.86" y="454.50" font-size="12.5" textLength="7.66" lengthAdjust="spacingAndGlyphs" stroke="#242424" stroke-width="0.15">€</text>
<text x="523.81" y="454.50" font-size="12.5" textLength="29.30" lengthAdjust="spacingAndGlyphs" stroke="#242424" stroke-width="0.15">-0,36</text>
<text x="563.86" y="454.50" font-size="12.5" textLength="7.66" lengthAdjust="spacingAndGlyphs" stroke="#242424" stroke-width="0.15">€</text>
<text x="638.81" y="454.50" font-size="12.5" textLength="29.30" lengthAdjust="spacingAndGlyphs" stroke="#242424" stroke-width="0.15">-0,36</text>
<text x="678.86" y="454.50" font-size="12.5" textLength="7.66" lengthAdjust="spacingAndGlyphs" stroke="#242424" stroke-width="0.15">€</text>
<rect x="758.6" y="450.7" width="3.5" height="1.1" fill="#242424"/>
<text x="72.72" y="474.50" font-size="12.5" textLength="28.59" lengthAdjust="spacingAndGlyphs" stroke="#242424" stroke-width="0.15">5436</text>
<text x="105.30" y="474.50" font-size="12.5" textLength="43.42" lengthAdjust="spacingAndGlyphs" stroke="#242424" stroke-width="0.15">Inkoop</text>
<text x="265.92" y="474.50" font-size="12.5" textLength="40.49" lengthAdjust="spacingAndGlyphs" stroke="#242424" stroke-width="0.15">Lasten</text>
<text x="412.98" y="474.50" font-size="12.5" textLength="28.59" lengthAdjust="spacingAndGlyphs" stroke="#242424" stroke-width="0.15">8321</text>
<text x="448.86" y="474.50" font-size="12.5" textLength="7.66" lengthAdjust="spacingAndGlyphs" stroke="#242424" stroke-width="0.15">€</text>
<text x="485.38" y="474.50" font-size="12.5" textLength="67.66" lengthAdjust="spacingAndGlyphs" stroke="#242424" stroke-width="0.15">-115.021,00</text>
<text x="563.86" y="474.50" font-size="12.5" textLength="7.66" lengthAdjust="spacingAndGlyphs" stroke="#242424" stroke-width="0.15">€</text>
<text x="606.61" y="474.50" font-size="12.5" textLength="61.46" lengthAdjust="spacingAndGlyphs" stroke="#242424" stroke-width="0.15">-84.021,00</text>
<text x="678.86" y="474.50" font-size="12.5" textLength="7.66" lengthAdjust="spacingAndGlyphs" stroke="#242424" stroke-width="0.15">€</text>
<text x="715.61" y="474.50" font-size="12.5" textLength="61.46" lengthAdjust="spacingAndGlyphs" stroke="#242424" stroke-width="0.15">-31.000,00</text>
<text x="72.72" y="494.50" font-size="12.5" textLength="28.59" lengthAdjust="spacingAndGlyphs" stroke="#242424" stroke-width="0.15">5436</text>
<text x="105.30" y="494.50" font-size="12.5" textLength="43.42" lengthAdjust="spacingAndGlyphs" stroke="#242424" stroke-width="0.15">Inkoop</text>
<text x="265.89" y="494.50" font-size="12.5" textLength="36.36" lengthAdjust="spacingAndGlyphs" stroke="#242424" stroke-width="0.15">Baten</text>
<text x="412.85" y="494.50" font-size="12.5" textLength="28.59" lengthAdjust="spacingAndGlyphs" stroke="#242424" stroke-width="0.15">8340</text>
<text x="448.86" y="494.50" font-size="12.5" textLength="7.66" lengthAdjust="spacingAndGlyphs" stroke="#242424" stroke-width="0.15">€</text>
<text x="492.57" y="494.50" font-size="12.5" textLength="60.51" lengthAdjust="spacingAndGlyphs" stroke="#242424" stroke-width="0.15">-11.566,00</text>
<text x="563.86" y="494.50" font-size="12.5" textLength="7.66" lengthAdjust="spacingAndGlyphs" stroke="#242424" stroke-width="0.15">€</text>
<rect x="649.6" y="490.7" width="3.5" height="1.1" fill="#242424"/>
<text x="678.86" y="494.50" font-size="12.5" textLength="7.66" lengthAdjust="spacingAndGlyphs" stroke="#242424" stroke-width="0.15">€</text>
<text x="716.57" y="494.50" font-size="12.5" textLength="60.51" lengthAdjust="spacingAndGlyphs" stroke="#242424" stroke-width="0.15">-11.566,00</text>
<text x="72.72" y="514.50" font-size="12.5" textLength="28.59" lengthAdjust="spacingAndGlyphs" stroke="#242424" stroke-width="0.15">5436</text>
<text x="105.30" y="514.50" font-size="12.5" textLength="43.42" lengthAdjust="spacingAndGlyphs" stroke="#242424" stroke-width="0.15">Inkoop</text>
<text x="265.92" y="514.50" font-size="12.5" textLength="40.49" lengthAdjust="spacingAndGlyphs" stroke="#242424" stroke-width="0.15">Lasten</text>
<text x="412.85" y="514.50" font-size="12.5" textLength="28.59" lengthAdjust="spacingAndGlyphs" stroke="#242424" stroke-width="0.15">8340</text>
<text x="448.86" y="514.50" font-size="12.5" textLength="7.66" lengthAdjust="spacingAndGlyphs" stroke="#242424" stroke-width="0.15">€</text>
<rect x="534.6" y="510.7" width="3.5" height="1.1" fill="#242424"/>
<text x="563.86" y="514.50" font-size="12.5" textLength="7.66" lengthAdjust="spacingAndGlyphs" stroke="#242424" stroke-width="0.15">€</text>
<text x="606.61" y="514.50" font-size="12.5" textLength="61.46" lengthAdjust="spacingAndGlyphs" stroke="#242424" stroke-width="0.15">-42.566,00</text>
<text x="678.86" y="514.50" font-size="12.5" textLength="7.66" lengthAdjust="spacingAndGlyphs" stroke="#242424" stroke-width="0.15">€</text>
<text x="719.85" y="514.50" font-size="12.5" textLength="57.18" lengthAdjust="spacingAndGlyphs" stroke="#242424" stroke-width="0.15">42.566,00</text>
<text x="72.72" y="534.50" font-size="12.5" textLength="28.59" lengthAdjust="spacingAndGlyphs" stroke="#242424" stroke-width="0.15">5436</text>
<text x="105.30" y="534.50" font-size="12.5" textLength="43.42" lengthAdjust="spacingAndGlyphs" stroke="#242424" stroke-width="0.15">Inkoop</text>
<text x="265.89" y="534.50" font-size="12.5" textLength="36.36" lengthAdjust="spacingAndGlyphs" stroke="#242424" stroke-width="0.15">Baten</text>
<text x="412.85" y="534.50" font-size="12.5" textLength="28.59" lengthAdjust="spacingAndGlyphs" stroke="#242424" stroke-width="0.15">4310</text>
<text x="448.86" y="534.50" font-size="12.5" textLength="7.66" lengthAdjust="spacingAndGlyphs" stroke="#242424" stroke-width="0.15">€</text>
<text x="495.85" y="534.50" font-size="12.5" textLength="57.18" lengthAdjust="spacingAndGlyphs" stroke="#242424" stroke-width="0.15">85.000,00</text>
<text x="563.86" y="534.50" font-size="12.5" textLength="7.66" lengthAdjust="spacingAndGlyphs" stroke="#242424" stroke-width="0.15">€</text>
<text x="610.85" y="534.50" font-size="12.5" textLength="57.18" lengthAdjust="spacingAndGlyphs" stroke="#242424" stroke-width="0.15">50.000,00</text>
<text x="678.86" y="534.50" font-size="12.5" textLength="7.66" lengthAdjust="spacingAndGlyphs" stroke="#242424" stroke-width="0.15">€</text>
<text x="719.85" y="534.50" font-size="12.5" textLength="57.18" lengthAdjust="spacingAndGlyphs" stroke="#242424" stroke-width="0.15">35.000,00</text>
<text x="72.59" y="554.50" font-size="12.5" textLength="28.59" lengthAdjust="spacingAndGlyphs" stroke="#242424" stroke-width="0.15">7814</text>
<text x="105.42" y="554.50" font-size="12.5" textLength="41.04" lengthAdjust="spacingAndGlyphs" stroke="#242424" stroke-width="0.15">Beleid</text>
<text x="265.89" y="554.50" font-size="12.5" textLength="36.36" lengthAdjust="spacingAndGlyphs" stroke="#242424" stroke-width="0.15">Baten</text>
<text x="412.92" y="554.50" font-size="12.5" textLength="28.59" lengthAdjust="spacingAndGlyphs" stroke="#242424" stroke-width="0.15">4343</text>
<text x="448.86" y="554.50" font-size="12.5" textLength="7.66" lengthAdjust="spacingAndGlyphs" stroke="#242424" stroke-width="0.15">€</text>
<text x="503.05" y="554.50" font-size="12.5" textLength="50.03" lengthAdjust="spacingAndGlyphs" stroke="#242424" stroke-width="0.15">2.000,00</text>
<text x="563.86" y="554.50" font-size="12.5" textLength="7.66" lengthAdjust="spacingAndGlyphs" stroke="#242424" stroke-width="0.15">€</text>
<text x="618.05" y="554.50" font-size="12.5" textLength="50.03" lengthAdjust="spacingAndGlyphs" stroke="#242424" stroke-width="0.15">3.100,00</text>
<text x="678.86" y="554.50" font-size="12.5" textLength="7.66" lengthAdjust="spacingAndGlyphs" stroke="#242424" stroke-width="0.15">€</text>
<text x="722.74" y="554.50" font-size="12.5" textLength="54.31" lengthAdjust="spacingAndGlyphs" stroke="#242424" stroke-width="0.15">-1.100,00</text>
<text x="72.59" y="574.50" font-size="12.5" textLength="28.59" lengthAdjust="spacingAndGlyphs" stroke="#242424" stroke-width="0.15">7814</text>
<text x="105.42" y="574.50" font-size="12.5" textLength="41.04" lengthAdjust="spacingAndGlyphs" stroke="#242424" stroke-width="0.15">Beleid</text>
<text x="265.89" y="574.50" font-size="12.5" textLength="36.36" lengthAdjust="spacingAndGlyphs" stroke="#242424" stroke-width="0.15">Baten</text>
<text x="412.92" y="574.50" font-size="12.5" textLength="28.59" lengthAdjust="spacingAndGlyphs" stroke="#242424" stroke-width="0.15">4343</text>
<text x="448.86" y="574.50" font-size="12.5" textLength="7.66" lengthAdjust="spacingAndGlyphs" stroke="#242424" stroke-width="0.15">€</text>
<text x="495.85" y="574.50" font-size="12.5" textLength="57.18" lengthAdjust="spacingAndGlyphs" stroke="#242424" stroke-width="0.15">92.800,00</text>
<text x="563.86" y="574.50" font-size="12.5" textLength="7.66" lengthAdjust="spacingAndGlyphs" stroke="#242424" stroke-width="0.15">€</text>
<text x="610.85" y="574.50" font-size="12.5" textLength="57.18" lengthAdjust="spacingAndGlyphs" stroke="#242424" stroke-width="0.15">92.800,00</text>
<text x="678.86" y="574.50" font-size="12.5" textLength="7.66" lengthAdjust="spacingAndGlyphs" stroke="#242424" stroke-width="0.15">€</text>
<rect x="758.6" y="570.7" width="3.5" height="1.1" fill="#242424"/>
<text x="72.59" y="594.50" font-size="12.5" textLength="28.59" lengthAdjust="spacingAndGlyphs" stroke="#242424" stroke-width="0.15">7814</text>
<text x="105.42" y="594.50" font-size="12.5" textLength="41.04" lengthAdjust="spacingAndGlyphs" stroke="#242424" stroke-width="0.15">Beleid</text>
<text x="265.89" y="594.50" font-size="12.5" textLength="36.36" lengthAdjust="spacingAndGlyphs" stroke="#242424" stroke-width="0.15">Baten</text>
<text x="412.98" y="594.50" font-size="12.5" textLength="28.59" lengthAdjust="spacingAndGlyphs" stroke="#242424" stroke-width="0.15">4341</text>
<text x="448.86" y="594.50" font-size="12.5" textLength="7.66" lengthAdjust="spacingAndGlyphs" stroke="#242424" stroke-width="0.15">€</text>
<text x="495.85" y="594.50" font-size="12.5" textLength="57.18" lengthAdjust="spacingAndGlyphs" stroke="#242424" stroke-width="0.15">43.600,00</text>
<text x="563.86" y="594.50" font-size="12.5" textLength="7.66" lengthAdjust="spacingAndGlyphs" stroke="#242424" stroke-width="0.15">€</text>
<text x="610.85" y="594.50" font-size="12.5" textLength="57.18" lengthAdjust="spacingAndGlyphs" stroke="#242424" stroke-width="0.15">43.600,00</text>
<text x="678.86" y="594.50" font-size="12.5" textLength="7.66" lengthAdjust="spacingAndGlyphs" stroke="#242424" stroke-width="0.15">€</text>
<rect x="758.6" y="590.7" width="3.5" height="1.1" fill="#242424"/>
<text x="72.59" y="614.50" font-size="12.5" textLength="28.59" lengthAdjust="spacingAndGlyphs" stroke="#242424" stroke-width="0.15">7814</text>
<text x="105.42" y="614.50" font-size="12.5" textLength="41.04" lengthAdjust="spacingAndGlyphs" stroke="#242424" stroke-width="0.15">Beleid</text>
<text x="265.89" y="614.50" font-size="12.5" textLength="36.36" lengthAdjust="spacingAndGlyphs" stroke="#242424" stroke-width="0.15">Baten</text>
<text x="412.98" y="614.50" font-size="12.5" textLength="28.59" lengthAdjust="spacingAndGlyphs" stroke="#242424" stroke-width="0.15">4341</text>
<text x="448.86" y="614.50" font-size="12.5" textLength="7.66" lengthAdjust="spacingAndGlyphs" stroke="#242424" stroke-width="0.15">€</text>
<text x="503.05" y="614.50" font-size="12.5" textLength="50.03" lengthAdjust="spacingAndGlyphs" stroke="#242424" stroke-width="0.15">5.000,00</text>
<text x="563.86" y="614.50" font-size="12.5" textLength="7.66" lengthAdjust="spacingAndGlyphs" stroke="#242424" stroke-width="0.15">€</text>
<text x="618.05" y="614.50" font-size="12.5" textLength="50.03" lengthAdjust="spacingAndGlyphs" stroke="#242424" stroke-width="0.15">5.000,00</text>
<text x="678.86" y="614.50" font-size="12.5" textLength="7.66" lengthAdjust="spacingAndGlyphs" stroke="#242424" stroke-width="0.15">€</text>
<rect x="758.6" y="610.7" width="3.5" height="1.1" fill="#242424"/>
<text x="72.59" y="634.50" font-size="12.5" textLength="28.59" lengthAdjust="spacingAndGlyphs" stroke="#242424" stroke-width="0.15">7814</text>
<text x="105.42" y="634.50" font-size="12.5" textLength="41.04" lengthAdjust="spacingAndGlyphs" stroke="#242424" stroke-width="0.15">Beleid</text>
<text x="265.89" y="634.50" font-size="12.5" textLength="36.36" lengthAdjust="spacingAndGlyphs" stroke="#242424" stroke-width="0.15">Baten</text>
<text x="412.98" y="634.50" font-size="12.5" textLength="28.59" lengthAdjust="spacingAndGlyphs" stroke="#242424" stroke-width="0.15">4341</text>
<text x="448.86" y="634.50" font-size="12.5" textLength="7.66" lengthAdjust="spacingAndGlyphs" stroke="#242424" stroke-width="0.15">€</text>
<text x="503.05" y="634.50" font-size="12.5" textLength="50.03" lengthAdjust="spacingAndGlyphs" stroke="#242424" stroke-width="0.15">1.200,00</text>
<text x="563.86" y="634.50" font-size="12.5" textLength="7.66" lengthAdjust="spacingAndGlyphs" stroke="#242424" stroke-width="0.15">€</text>
<text x="618.05" y="634.50" font-size="12.5" textLength="50.03" lengthAdjust="spacingAndGlyphs" stroke="#242424" stroke-width="0.15">1.200,00</text>
<text x="678.86" y="634.50" font-size="12.5" textLength="7.66" lengthAdjust="spacingAndGlyphs" stroke="#242424" stroke-width="0.15">€</text>
<rect x="758.6" y="630.7" width="3.5" height="1.1" fill="#242424"/>
<text x="72.59" y="654.50" font-size="12.5" textLength="28.59" lengthAdjust="spacingAndGlyphs" stroke="#242424" stroke-width="0.15">7814</text>
<text x="105.42" y="654.50" font-size="12.5" textLength="41.04" lengthAdjust="spacingAndGlyphs" stroke="#242424" stroke-width="0.15">Beleid</text>
<text x="265.89" y="654.50" font-size="12.5" textLength="36.36" lengthAdjust="spacingAndGlyphs" stroke="#242424" stroke-width="0.15">Baten</text>
<text x="412.98" y="654.50" font-size="12.5" textLength="28.59" lengthAdjust="spacingAndGlyphs" stroke="#242424" stroke-width="0.15">4341</text>
<text x="448.86" y="654.50" font-size="12.5" textLength="7.66" lengthAdjust="spacingAndGlyphs" stroke="#242424" stroke-width="0.15">€</text>
<text x="513.72" y="654.50" font-size="12.5" textLength="39.31" lengthAdjust="spacingAndGlyphs" stroke="#242424" stroke-width="0.15">200,00</text>
<text x="563.86" y="654.50" font-size="12.5" textLength="7.66" lengthAdjust="spacingAndGlyphs" stroke="#242424" stroke-width="0.15">€</text>
<text x="628.72" y="654.50" font-size="12.5" textLength="39.31" lengthAdjust="spacingAndGlyphs" stroke="#242424" stroke-width="0.15">200,00</text>
<text x="678.86" y="654.50" font-size="12.5" textLength="7.66" lengthAdjust="spacingAndGlyphs" stroke="#242424" stroke-width="0.15">€</text>
<rect x="758.6" y="650.7" width="3.5" height="1.1" fill="#242424"/>
<text x="72.59" y="674.50" font-size="12.5" textLength="28.59" lengthAdjust="spacingAndGlyphs" stroke="#242424" stroke-width="0.15">7814</text>
<text x="105.42" y="674.50" font-size="12.5" textLength="41.04" lengthAdjust="spacingAndGlyphs" stroke="#242424" stroke-width="0.15">Beleid</text>
<text x="265.89" y="674.50" font-size="12.5" textLength="36.36" lengthAdjust="spacingAndGlyphs" stroke="#242424" stroke-width="0.15">Baten</text>
<text x="412.92" y="674.50" font-size="12.5" textLength="28.59" lengthAdjust="spacingAndGlyphs" stroke="#242424" stroke-width="0.15">4343</text>
<text x="448.86" y="674.50" font-size="12.5" textLength="7.66" lengthAdjust="spacingAndGlyphs" stroke="#242424" stroke-width="0.15">€</text>
<text x="495.85" y="674.50" font-size="12.5" textLength="57.18" lengthAdjust="spacingAndGlyphs" stroke="#242424" stroke-width="0.15">10.200,00</text>
<text x="563.86" y="674.50" font-size="12.5" textLength="7.66" lengthAdjust="spacingAndGlyphs" stroke="#242424" stroke-width="0.15">€</text>
<text x="610.85" y="674.50" font-size="12.5" textLength="57.18" lengthAdjust="spacingAndGlyphs" stroke="#242424" stroke-width="0.15">10.200,00</text>
<text x="678.86" y="674.50" font-size="12.5" textLength="7.66" lengthAdjust="spacingAndGlyphs" stroke="#242424" stroke-width="0.15">€</text>
<rect x="758.6" y="670.7" width="3.5" height="1.1" fill="#242424"/>
<text x="72.59" y="694.50" font-size="12.5" textLength="28.59" lengthAdjust="spacingAndGlyphs" stroke="#242424" stroke-width="0.15">7814</text>
<text x="105.42" y="694.50" font-size="12.5" textLength="41.04" lengthAdjust="spacingAndGlyphs" stroke="#242424" stroke-width="0.15">Beleid</text>
<text x="265.89" y="694.50" font-size="12.5" textLength="36.36" lengthAdjust="spacingAndGlyphs" stroke="#242424" stroke-width="0.15">Baten</text>
<text x="412.92" y="694.50" font-size="12.5" textLength="28.59" lengthAdjust="spacingAndGlyphs" stroke="#242424" stroke-width="0.15">4343</text>
<text x="448.86" y="694.50" font-size="12.5" textLength="7.66" lengthAdjust="spacingAndGlyphs" stroke="#242424" stroke-width="0.15">€</text>
<text x="489.68" y="694.50" font-size="12.5" textLength="63.38" lengthAdjust="spacingAndGlyphs" stroke="#242424" stroke-width="0.15">110.000,00</text>
<text x="563.86" y="694.50" font-size="12.5" textLength="7.66" lengthAdjust="spacingAndGlyphs" stroke="#242424" stroke-width="0.15">€</text>
<text x="604.68" y="694.50" font-size="12.5" textLength="63.38" lengthAdjust="spacingAndGlyphs" stroke="#242424" stroke-width="0.15">110.000,00</text>
<text x="678.86" y="694.50" font-size="12.5" textLength="7.66" lengthAdjust="spacingAndGlyphs" stroke="#242424" stroke-width="0.15">€</text>
<rect x="758.6" y="690.7" width="3.5" height="1.1" fill="#242424"/>
<text x="72.59" y="714.50" font-size="12.5" textLength="28.59" lengthAdjust="spacingAndGlyphs" stroke="#242424" stroke-width="0.15">7814</text>
<text x="105.42" y="714.50" font-size="12.5" textLength="41.04" lengthAdjust="spacingAndGlyphs" stroke="#242424" stroke-width="0.15">Beleid</text>
<text x="265.89" y="714.50" font-size="12.5" textLength="36.36" lengthAdjust="spacingAndGlyphs" stroke="#242424" stroke-width="0.15">Baten</text>
<text x="412.92" y="714.50" font-size="12.5" textLength="28.59" lengthAdjust="spacingAndGlyphs" stroke="#242424" stroke-width="0.15">4343</text>
<text x="448.86" y="714.50" font-size="12.5" textLength="7.66" lengthAdjust="spacingAndGlyphs" stroke="#242424" stroke-width="0.15">€</text>
<text x="503.05" y="714.50" font-size="12.5" textLength="50.03" lengthAdjust="spacingAndGlyphs" stroke="#242424" stroke-width="0.15">3.000,00</text>
<text x="563.86" y="714.50" font-size="12.5" textLength="7.66" lengthAdjust="spacingAndGlyphs" stroke="#242424" stroke-width="0.15">€</text>
<text x="618.05" y="714.50" font-size="12.5" textLength="50.03" lengthAdjust="spacingAndGlyphs" stroke="#242424" stroke-width="0.15">3.000,00</text>
<text x="678.86" y="714.50" font-size="12.5" textLength="7.66" lengthAdjust="spacingAndGlyphs" stroke="#242424" stroke-width="0.15">€</text>
<rect x="758.6" y="710.7" width="3.5" height="1.1" fill="#242424"/>
<text x="72.59" y="734.50" font-size="12.5" textLength="28.59" lengthAdjust="spacingAndGlyphs" stroke="#242424" stroke-width="0.15">7814</text>
<text x="105.42" y="734.50" font-size="12.5" textLength="41.04" lengthAdjust="spacingAndGlyphs" stroke="#242424" stroke-width="0.15">Beleid</text>
<text x="265.92" y="734.50" font-size="12.5" textLength="40.49" lengthAdjust="spacingAndGlyphs" stroke="#242424" stroke-width="0.15">Lasten</text>
<text x="413.04" y="734.50" font-size="12.5" textLength="28.59" lengthAdjust="spacingAndGlyphs" stroke="#242424" stroke-width="0.15">8622</text>
<text x="448.86" y="734.50" font-size="12.5" textLength="7.66" lengthAdjust="spacingAndGlyphs" stroke="#242424" stroke-width="0.15">€</text>
<text x="474.71" y="734.50" font-size="12.5" textLength="78.38" lengthAdjust="spacingAndGlyphs" stroke="#242424" stroke-width="0.15">-1.811.631,00</text>
<text x="563.86" y="734.50" font-size="12.5" textLength="7.66" lengthAdjust="spacingAndGlyphs" stroke="#242424" stroke-width="0.15">€</text>
<text x="588.74" y="734.50" font-size="12.5" textLength="79.33" lengthAdjust="spacingAndGlyphs" stroke="#242424" stroke-width="0.15">-1.777.731,00</text>
<text x="678.86" y="734.50" font-size="12.5" textLength="7.66" lengthAdjust="spacingAndGlyphs" stroke="#242424" stroke-width="0.15">€</text>
<text x="715.61" y="734.50" font-size="12.5" textLength="61.46" lengthAdjust="spacingAndGlyphs" stroke="#242424" stroke-width="0.15">-33.900,00</text>
<text x="72.59" y="754.50" font-size="12.5" textLength="28.59" lengthAdjust="spacingAndGlyphs" stroke="#242424" stroke-width="0.15">7814</text>
<text x="105.42" y="754.50" font-size="12.5" textLength="41.04" lengthAdjust="spacingAndGlyphs" stroke="#242424" stroke-width="0.15">Beleid</text>
<text x="265.89" y="754.50" font-size="12.5" textLength="36.36" lengthAdjust="spacingAndGlyphs" stroke="#242424" stroke-width="0.15">Baten</text>
<text x="412.85" y="754.50" font-size="12.5" textLength="28.59" lengthAdjust="spacingAndGlyphs" stroke="#242424" stroke-width="0.15">4610</text>
<text x="448.86" y="754.50" font-size="12.5" textLength="7.66" lengthAdjust="spacingAndGlyphs" stroke="#242424" stroke-width="0.15">€</text>
<text x="478.11" y="754.50" font-size="12.5" textLength="75.05" lengthAdjust="spacingAndGlyphs" stroke="#242424" stroke-width="0.15">1.585.218,09</text>
<text x="563.86" y="754.50" font-size="12.5" textLength="7.66" lengthAdjust="spacingAndGlyphs" stroke="#242424" stroke-width="0.15">€</text>
<text x="593.11" y="754.50" font-size="12.5" textLength="75.05" lengthAdjust="spacingAndGlyphs" stroke="#242424" stroke-width="0.15">1.585.218,09</text>
<text x="678.86" y="754.50" font-size="12.5" textLength="7.66" lengthAdjust="spacingAndGlyphs" stroke="#242424" stroke-width="0.15">€</text>
<rect x="758.6" y="750.7" width="3.5" height="1.1" fill="#242424"/>
<defs><pattern id="dp" x="0" y="0" width="2" height="1" patternUnits="userSpaceOnUse"><rect x="1" y="0" width="1" height="1" fill="#000"/></pattern></defs>
<rect x="23" y="279" width="80" height="1" fill="url(#dp)"/>
<rect x="104" y="279" width="159" height="1" fill="url(#dp)"/>
<rect x="264" y="279" width="81" height="1" fill="url(#dp)"/>
<rect x="346" y="279" width="97" height="1" fill="url(#dp)"/>
<rect x="444" y="279" width="114" height="1" fill="url(#dp)"/>
<rect x="559" y="279" width="114" height="1" fill="url(#dp)"/>
<rect x="674" y="279" width="108" height="1" fill="url(#dp)"/>
<rect x="23" y="299" width="80" height="1" fill="url(#dp)"/>
<rect x="104" y="299" width="159" height="1" fill="url(#dp)"/>
<rect x="264" y="299" width="81" height="1" fill="url(#dp)"/>
<rect x="346" y="299" width="97" height="1" fill="url(#dp)"/>
<rect x="444" y="299" width="114" height="1" fill="url(#dp)"/>
<rect x="559" y="299" width="114" height="1" fill="url(#dp)"/>
<rect x="674" y="299" width="108" height="1" fill="url(#dp)"/>
<rect x="23" y="319" width="80" height="1" fill="url(#dp)"/>
<rect x="104" y="319" width="159" height="1" fill="url(#dp)"/>
<rect x="264" y="319" width="81" height="1" fill="url(#dp)"/>
<rect x="346" y="319" width="97" height="1" fill="url(#dp)"/>
<rect x="444" y="319" width="114" height="1" fill="url(#dp)"/>
<rect x="559" y="319" width="114" height="1" fill="url(#dp)"/>
<rect x="674" y="319" width="108" height="1" fill="url(#dp)"/>
<rect x="23" y="339" width="80" height="1" fill="url(#dp)"/>
<rect x="104" y="339" width="159" height="1" fill="url(#dp)"/>
<rect x="264" y="339" width="81" height="1" fill="url(#dp)"/>
<rect x="346" y="339" width="97" height="1" fill="url(#dp)"/>
<rect x="444" y="339" width="114" height="1" fill="url(#dp)"/>
<rect x="559" y="339" width="114" height="1" fill="url(#dp)"/>
<rect x="674" y="339" width="108" height="1" fill="url(#dp)"/>
<rect x="23" y="359" width="80" height="1" fill="url(#dp)"/>
<rect x="104" y="359" width="159" height="1" fill="url(#dp)"/>
<rect x="264" y="359" width="81" height="1" fill="url(#dp)"/>
<rect x="346" y="359" width="97" height="1" fill="url(#dp)"/>
<rect x="444" y="359" width="114" height="1" fill="url(#dp)"/>
<rect x="559" y="359" width="114" height="1" fill="url(#dp)"/>
<rect x="674" y="359" width="108" height="1" fill="url(#dp)"/>
<rect x="23" y="379" width="80" height="1" fill="url(#dp)"/>
<rect x="104" y="379" width="159" height="1" fill="url(#dp)"/>
<rect x="264" y="379" width="81" height="1" fill="url(#dp)"/>
<rect x="346" y="379" width="97" height="1" fill="url(#dp)"/>
<rect x="444" y="379" width="114" height="1" fill="url(#dp)"/>
<rect x="559" y="379" width="114" height="1" fill="url(#dp)"/>
<rect x="674" y="379" width="108" height="1" fill="url(#dp)"/>
<rect x="23" y="399" width="80" height="1" fill="url(#dp)"/>
<rect x="104" y="399" width="159" height="1" fill="url(#dp)"/>
<rect x="264" y="399" width="81" height="1" fill="url(#dp)"/>
<rect x="346" y="399" width="97" height="1" fill="url(#dp)"/>
<rect x="444" y="399" width="114" height="1" fill="url(#dp)"/>
<rect x="559" y="399" width="114" height="1" fill="url(#dp)"/>
<rect x="674" y="399" width="108" height="1" fill="url(#dp)"/>
<rect x="23" y="419" width="80" height="1" fill="url(#dp)"/>
<rect x="104" y="419" width="159" height="1" fill="url(#dp)"/>
<rect x="264" y="419" width="81" height="1" fill="url(#dp)"/>
<rect x="346" y="419" width="97" height="1" fill="url(#dp)"/>
<rect x="444" y="419" width="114" height="1" fill="url(#dp)"/>
<rect x="559" y="419" width="114" height="1" fill="url(#dp)"/>
<rect x="674" y="419" width="108" height="1" fill="url(#dp)"/>
<rect x="23" y="439" width="80" height="1" fill="url(#dp)"/>
<rect x="104" y="439" width="159" height="1" fill="url(#dp)"/>
<rect x="264" y="439" width="81" height="1" fill="url(#dp)"/>
<rect x="346" y="439" width="97" height="1" fill="url(#dp)"/>
<rect x="444" y="439" width="114" height="1" fill="url(#dp)"/>
<rect x="559" y="439" width="114" height="1" fill="url(#dp)"/>
<rect x="674" y="439" width="108" height="1" fill="url(#dp)"/>
<rect x="23" y="459" width="80" height="1" fill="url(#dp)"/>
<rect x="104" y="459" width="159" height="1" fill="url(#dp)"/>
<rect x="264" y="459" width="81" height="1" fill="url(#dp)"/>
<rect x="346" y="459" width="97" height="1" fill="url(#dp)"/>
<rect x="444" y="459" width="114" height="1" fill="url(#dp)"/>
<rect x="559" y="459" width="114" height="1" fill="url(#dp)"/>
<rect x="674" y="459" width="108" height="1" fill="url(#dp)"/>
<rect x="23" y="479" width="80" height="1" fill="url(#dp)"/>
<rect x="104" y="479" width="159" height="1" fill="url(#dp)"/>
<rect x="264" y="479" width="81" height="1" fill="url(#dp)"/>
<rect x="346" y="479" width="97" height="1" fill="url(#dp)"/>
<rect x="444" y="479" width="114" height="1" fill="url(#dp)"/>
<rect x="559" y="479" width="114" height="1" fill="url(#dp)"/>
<rect x="674" y="479" width="108" height="1" fill="url(#dp)"/>
<rect x="23" y="499" width="80" height="1" fill="url(#dp)"/>
<rect x="104" y="499" width="159" height="1" fill="url(#dp)"/>
<rect x="264" y="499" width="81" height="1" fill="url(#dp)"/>
<rect x="346" y="499" width="97" height="1" fill="url(#dp)"/>
<rect x="444" y="499" width="114" height="1" fill="url(#dp)"/>
<rect x="559" y="499" width="114" height="1" fill="url(#dp)"/>
<rect x="674" y="499" width="108" height="1" fill="url(#dp)"/>
<rect x="23" y="519" width="80" height="1" fill="url(#dp)"/>
<rect x="104" y="519" width="159" height="1" fill="url(#dp)"/>
<rect x="264" y="519" width="81" height="1" fill="url(#dp)"/>
<rect x="346" y="519" width="97" height="1" fill="url(#dp)"/>
<rect x="444" y="519" width="114" height="1" fill="url(#dp)"/>
<rect x="559" y="519" width="114" height="1" fill="url(#dp)"/>
<rect x="674" y="519" width="108" height="1" fill="url(#dp)"/>
<rect x="23" y="539" width="80" height="1" fill="url(#dp)"/>
<rect x="104" y="539" width="159" height="1" fill="url(#dp)"/>
<rect x="264" y="539" width="81" height="1" fill="url(#dp)"/>
<rect x="346" y="539" width="97" height="1" fill="url(#dp)"/>
<rect x="444" y="539" width="114" height="1" fill="url(#dp)"/>
<rect x="559" y="539" width="114" height="1" fill="url(#dp)"/>
<rect x="674" y="539" width="108" height="1" fill="url(#dp)"/>
<rect x="23" y="559" width="80" height="1" fill="url(#dp)"/>
<rect x="104" y="559" width="159" height="1" fill="url(#dp)"/>
<rect x="264" y="559" width="81" height="1" fill="url(#dp)"/>
<rect x="346" y="559" width="97" height="1" fill="url(#dp)"/>
<rect x="444" y="559" width="114" height="1" fill="url(#dp)"/>
<rect x="559" y="559" width="114" height="1" fill="url(#dp)"/>
<rect x="674" y="559" width="108" height="1" fill="url(#dp)"/>
<rect x="23" y="579" width="80" height="1" fill="url(#dp)"/>
<rect x="104" y="579" width="159" height="1" fill="url(#dp)"/>
<rect x="264" y="579" width="81" height="1" fill="url(#dp)"/>
<rect x="346" y="579" width="97" height="1" fill="url(#dp)"/>
<rect x="444" y="579" width="114" height="1" fill="url(#dp)"/>
<rect x="559" y="579" width="114" height="1" fill="url(#dp)"/>
<rect x="674" y="579" width="108" height="1" fill="url(#dp)"/>
<rect x="23" y="599" width="80" height="1" fill="url(#dp)"/>
<rect x="104" y="599" width="159" height="1" fill="url(#dp)"/>
<rect x="264" y="599" width="81" height="1" fill="url(#dp)"/>
<rect x="346" y="599" width="97" height="1" fill="url(#dp)"/>
<rect x="444" y="599" width="114" height="1" fill="url(#dp)"/>
<rect x="559" y="599" width="114" height="1" fill="url(#dp)"/>
<rect x="674" y="599" width="108" height="1" fill="url(#dp)"/>
<rect x="23" y="619" width="80" height="1" fill="url(#dp)"/>
<rect x="104" y="619" width="159" height="1" fill="url(#dp)"/>
<rect x="264" y="619" width="81" height="1" fill="url(#dp)"/>
<rect x="346" y="619" width="97" height="1" fill="url(#dp)"/>
<rect x="444" y="619" width="114" height="1" fill="url(#dp)"/>
<rect x="559" y="619" width="114" height="1" fill="url(#dp)"/>
<rect x="674" y="619" width="108" height="1" fill="url(#dp)"/>
<rect x="23" y="639" width="80" height="1" fill="url(#dp)"/>
<rect x="104" y="639" width="159" height="1" fill="url(#dp)"/>
<rect x="264" y="639" width="81" height="1" fill="url(#dp)"/>
<rect x="346" y="639" width="97" height="1" fill="url(#dp)"/>
<rect x="444" y="639" width="114" height="1" fill="url(#dp)"/>
<rect x="559" y="639" width="114" height="1" fill="url(#dp)"/>
<rect x="674" y="639" width="108" height="1" fill="url(#dp)"/>
<rect x="23" y="659" width="80" height="1" fill="url(#dp)"/>
<rect x="104" y="659" width="159" height="1" fill="url(#dp)"/>
<rect x="264" y="659" width="81" height="1" fill="url(#dp)"/>
<rect x="346" y="659" width="97" height="1" fill="url(#dp)"/>
<rect x="444" y="659" width="114" height="1" fill="url(#dp)"/>
<rect x="559" y="659" width="114" height="1" fill="url(#dp)"/>
<rect x="674" y="659" width="108" height="1" fill="url(#dp)"/>
<rect x="23" y="679" width="80" height="1" fill="url(#dp)"/>
<rect x="104" y="679" width="159" height="1" fill="url(#dp)"/>
<rect x="264" y="679" width="81" height="1" fill="url(#dp)"/>
<rect x="346" y="679" width="97" height="1" fill="url(#dp)"/>
<rect x="444" y="679" width="114" height="1" fill="url(#dp)"/>
<rect x="559" y="679" width="114" height="1" fill="url(#dp)"/>
<rect x="674" y="679" width="108" height="1" fill="url(#dp)"/>
<rect x="23" y="699" width="80" height="1" fill="url(#dp)"/>
<rect x="104" y="699" width="159" height="1" fill="url(#dp)"/>
<rect x="264" y="699" width="81" height="1" fill="url(#dp)"/>
<rect x="346" y="699" width="97" height="1" fill="url(#dp)"/>
<rect x="444" y="699" width="114" height="1" fill="url(#dp)"/>
<rect x="559" y="699" width="114" height="1" fill="url(#dp)"/>
<rect x="674" y="699" width="108" height="1" fill="url(#dp)"/>
<rect x="23" y="719" width="80" height="1" fill="url(#dp)"/>
<rect x="104" y="719" width="159" height="1" fill="url(#dp)"/>
<rect x="264" y="719" width="81" height="1" fill="url(#dp)"/>
<rect x="346" y="719" width="97" height="1" fill="url(#dp)"/>
<rect x="444" y="719" width="114" height="1" fill="url(#dp)"/>
<rect x="559" y="719" width="114" height="1" fill="url(#dp)"/>
<rect x="674" y="719" width="108" height="1" fill="url(#dp)"/>
<rect x="23" y="739" width="80" height="1" fill="url(#dp)"/>
<rect x="104" y="739" width="159" height="1" fill="url(#dp)"/>
<rect x="264" y="739" width="81" height="1" fill="url(#dp)"/>
<rect x="346" y="739" width="97" height="1" fill="url(#dp)"/>
<rect x="444" y="739" width="114" height="1" fill="url(#dp)"/>
<rect x="559" y="739" width="114" height="1" fill="url(#dp)"/>
<rect x="674" y="739" width="108" height="1" fill="url(#dp)"/>
<rect x="103" y="219" width="1" height="40" fill="#000"/>
<rect x="103" y="260" width="1" height="497" fill="#000"/>
<rect x="263" y="219" width="1" height="40" fill="#000"/>
<rect x="263" y="260" width="1" height="497" fill="#000"/>
<rect x="345" y="219" width="1" height="40" fill="#000"/>
<rect x="345" y="260" width="1" height="497" fill="#000"/>
<rect x="443" y="219" width="1" height="40" fill="#000"/>
<rect x="443" y="260" width="1" height="497" fill="#000"/>
<rect x="558" y="219" width="1" height="40" fill="#000"/>
<rect x="558" y="260" width="1" height="497" fill="#000"/>
<rect x="673" y="219" width="1" height="40" fill="#000"/>
<rect x="673" y="260" width="1" height="497" fill="#000"/>
<rect x="782" y="219" width="1" height="40" fill="#000"/>
<rect x="782" y="260" width="1" height="497" fill="#000"/>
<path d="M434.5 522.5 V539 L438.3 535.4 L441.2 541.2 L443.6 540.1 L440.8 534.4 H446 Z" fill="#fff" stroke="#000" stroke-width="1" stroke-linejoin="miter"/>
</svg>
</body></html>
